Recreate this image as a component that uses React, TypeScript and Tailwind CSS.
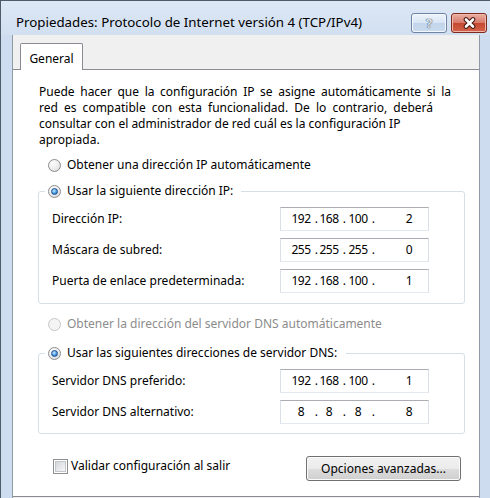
const FONT = "font-['Noto_Sans',sans-serif]";

function Radio({ checked = false, disabled = false }: { checked?: boolean; disabled?: boolean }) {
  return (
    <span
      className={
        disabled
          ? "flex size-[13px] shrink-0 items-center justify-center rounded-full border border-[#c6c6c6] bg-[#f4f4f4]"
          : "flex size-[13px] shrink-0 items-center justify-center rounded-full border border-[#8a8c8e] bg-[radial-gradient(circle_at_35%_30%,#ffffff,#ececec_55%,#cdcdcd)]"
      }
    >
      {checked && (
        <span className="size-[7px] rounded-full border border-[#1b4f8f] bg-[radial-gradient(circle_at_40%_35%,#c4e8ff,#4b9ce4_55%,#13539f)]" />
      )}
    </span>
  );
}

function IpBox({ parts }: { parts: string[] }) {
  return (
    <div className="flex h-[24px] w-[149px] shrink-0 items-center border border-[#dbdfe6] border-t-[#abadb3] border-b-[#e3e9ef] bg-white pl-[8px] tracking-[-0.5px] whitespace-nowrap">
      <span className="flex w-[24px] shrink-0 justify-center">{parts[0]}</span>
      <span className="flex w-[6px] shrink-0 justify-center">.</span>
      <span className="flex w-[20px] shrink-0 justify-center">{parts[1]}</span>
      <span className="flex w-[10px] shrink-0 justify-center">.</span>
      <span className="flex w-[18px] shrink-0 justify-center">{parts[2]}</span>
      <span className="flex w-[12px] shrink-0 justify-center">.</span>
      <span className="flex flex-1 justify-end pr-[16px]">{parts[3]}</span>
    </div>
  );
}

function Row({ label, parts }: { label: string; parts: string[] }) {
  return (
    <div className="flex h-[24px] items-center">
      <span className="ml-[7px] w-[228px] shrink-0">{label}</span>
      <IpBox parts={parts} />
    </div>
  );
}

export default function App() {
  return (
    <div
      className={`flex h-[498px] w-[490px] flex-col overflow-hidden border-t border-l border-[#505b69] bg-[#cddcee] text-[12px] leading-[16px] text-black ${FONT}`}
    >
      {/* title bar */}
      <div className="flex h-[34px] items-start bg-[linear-gradient(#dde8f5,#d1dff0)]">
        <span className="ml-[15px] mt-[13px] flex-1 text-[13.3px] whitespace-nowrap">
          Propiedades: Protocolo de Internet versión 4 (TCP/IPv4)
        </span>
        <div className="mt-[12px] mr-[3px] flex gap-[4px]">
          <div className="flex h-[20px] w-[36px] items-center justify-center rounded-[3px] border border-[#6f84a3] bg-[linear-gradient(#eef4fb,#d8e5f4_50%,#c3d5eb_50%,#c9daee)] shadow-[inset_0_0_0_1px_#f4f8fd]">
            <span className="text-[13px] leading-[14px] font-bold text-[#dfe4ea] [text-shadow:0_0_1px_#34435a,0_0_1px_#34435a]">
              ?
            </span>
          </div>
          <div className="flex h-[20px] w-[36px] items-center justify-center rounded-[3px] border border-[#7b2b1f] bg-[linear-gradient(#eab0a2,#d7786a_50%,#c5472f_50%,#d4644c)] shadow-[inset_0_0_0_1px_#f0b8aa]">
            <svg width="15" height="12" viewBox="0 0 15 12">
              <path d="M4 2.5 L11 9.5 M11 2.5 L4 9.5" stroke="#431a12" strokeWidth="4.6" strokeLinecap="round" />
              <path d="M4 2.5 L11 9.5 M11 2.5 L4 9.5" stroke="#ffffff" strokeWidth="2.6" strokeLinecap="round" />
            </svg>
          </div>
        </div>
      </div>

      <div className="flex flex-1">
        <div className="w-[11px]" />
        <div className="flex w-[468px] flex-col border-x border-[#8f9aa6] bg-[#f0f0f0] pt-[8px]">
          {/* tab */}
          <div className="relative z-10 -mb-px ml-[7px] flex h-[27px] w-[63px] justify-center rounded-t-[2px] border border-b-0 border-[#898c95] bg-white pt-[7px]">
            General
          </div>

          {/* panel */}
          <div className="mb-px flex flex-1 flex-col border-y border-[#898c95] bg-white">
            <p className="mt-[14px] ml-[26px] whitespace-nowrap">
              <span className="[word-spacing:2.5px]">
                Puede hacer que la configuración IP se asigne automáticamente si la
              </span>
              <br />
              <span className="[word-spacing:3px]">
                red es compatible con esta funcionalidad. De lo contrario, deberá
              </span>
              <br />
              consultar con el administrador de red cuál es la configuración IP
              <br />
              apropiada.
            </p>

            <div className="mt-[9px] ml-[35px] flex items-center gap-[6px]">
              <Radio />
              <span>Obtener una dirección IP automáticamente</span>
            </div>

            <fieldset className="mt-[10px] ml-[25px] w-[427px] rounded-[3px] border border-[#d5dfe5] pb-[10px] pl-[6px]">
              <legend className="pr-[8px] pl-[3px]">
                <span className="flex items-center gap-[6px]">
                  <Radio checked />
                  <span>Usar la siguiente dirección IP:</span>
                </span>
              </legend>
              <div className="mt-[8px] flex flex-col gap-[7px]">
                <Row label="Dirección IP:" parts={["192", "168", "100", "2"]} />
                <Row label="Máscara de subred:" parts={["255", "255", "255", "0"]} />
                <Row label="Puerta de enlace predeterminada:" parts={["192", "168", "100", "1"]} />
              </div>
            </fieldset>

            <div className="mt-[12px] ml-[35px] flex items-center gap-[6px]">
              <Radio disabled />
              <span className="text-[#8c8c8c]">Obtener la dirección del servidor DNS automáticamente</span>
            </div>

            <fieldset className="mt-[13px] ml-[25px] w-[427px] rounded-[3px] border border-[#d5dfe5] pb-[9px] pl-[6px]">
              <legend className="pr-[9px] pl-[3px]">
                <span className="flex items-center gap-[6px]">
                  <Radio checked />
                  <span>Usar las siguientes direcciones de servidor DNS:</span>
                </span>
              </legend>
              <div className="mt-[8px] flex flex-col gap-[7px]">
                <Row label="Servidor DNS preferido:" parts={["192", "168", "100", "1"]} />
                <Row label="Servidor DNS alternativo:" parts={["8", "8", "8", "8"]} />
              </div>
            </fieldset>

            <div className="mt-[22px] flex items-start justify-between">
              <div className="mt-[2px] ml-[40px] flex items-center gap-[3px]">
                <span className="flex size-[15px] items-center justify-center border border-[#8e8f8f] bg-white">
                  <span className="size-[11px] border border-[#c3c6cb] bg-[linear-gradient(135deg,#d3d6da,#f7f7f7)]" />
                </span>
                <span>Validar configuración al salir</span>
              </div>
              <button className="mr-[18px] flex h-[25px] w-[155px] items-center justify-center rounded-[3px] border border-[#707070] bg-[linear-gradient(#f2f2f2,#ebebeb_50%,#dddddd_50%,#cfcfcf)] shadow-[inset_0_0_0_1px_#fbfbfb]">
                Opciones avanzadas...
              </button>
            </div>
          </div>
        </div>
        <div className="flex-1" />
      </div>
    </div>
  );
}
